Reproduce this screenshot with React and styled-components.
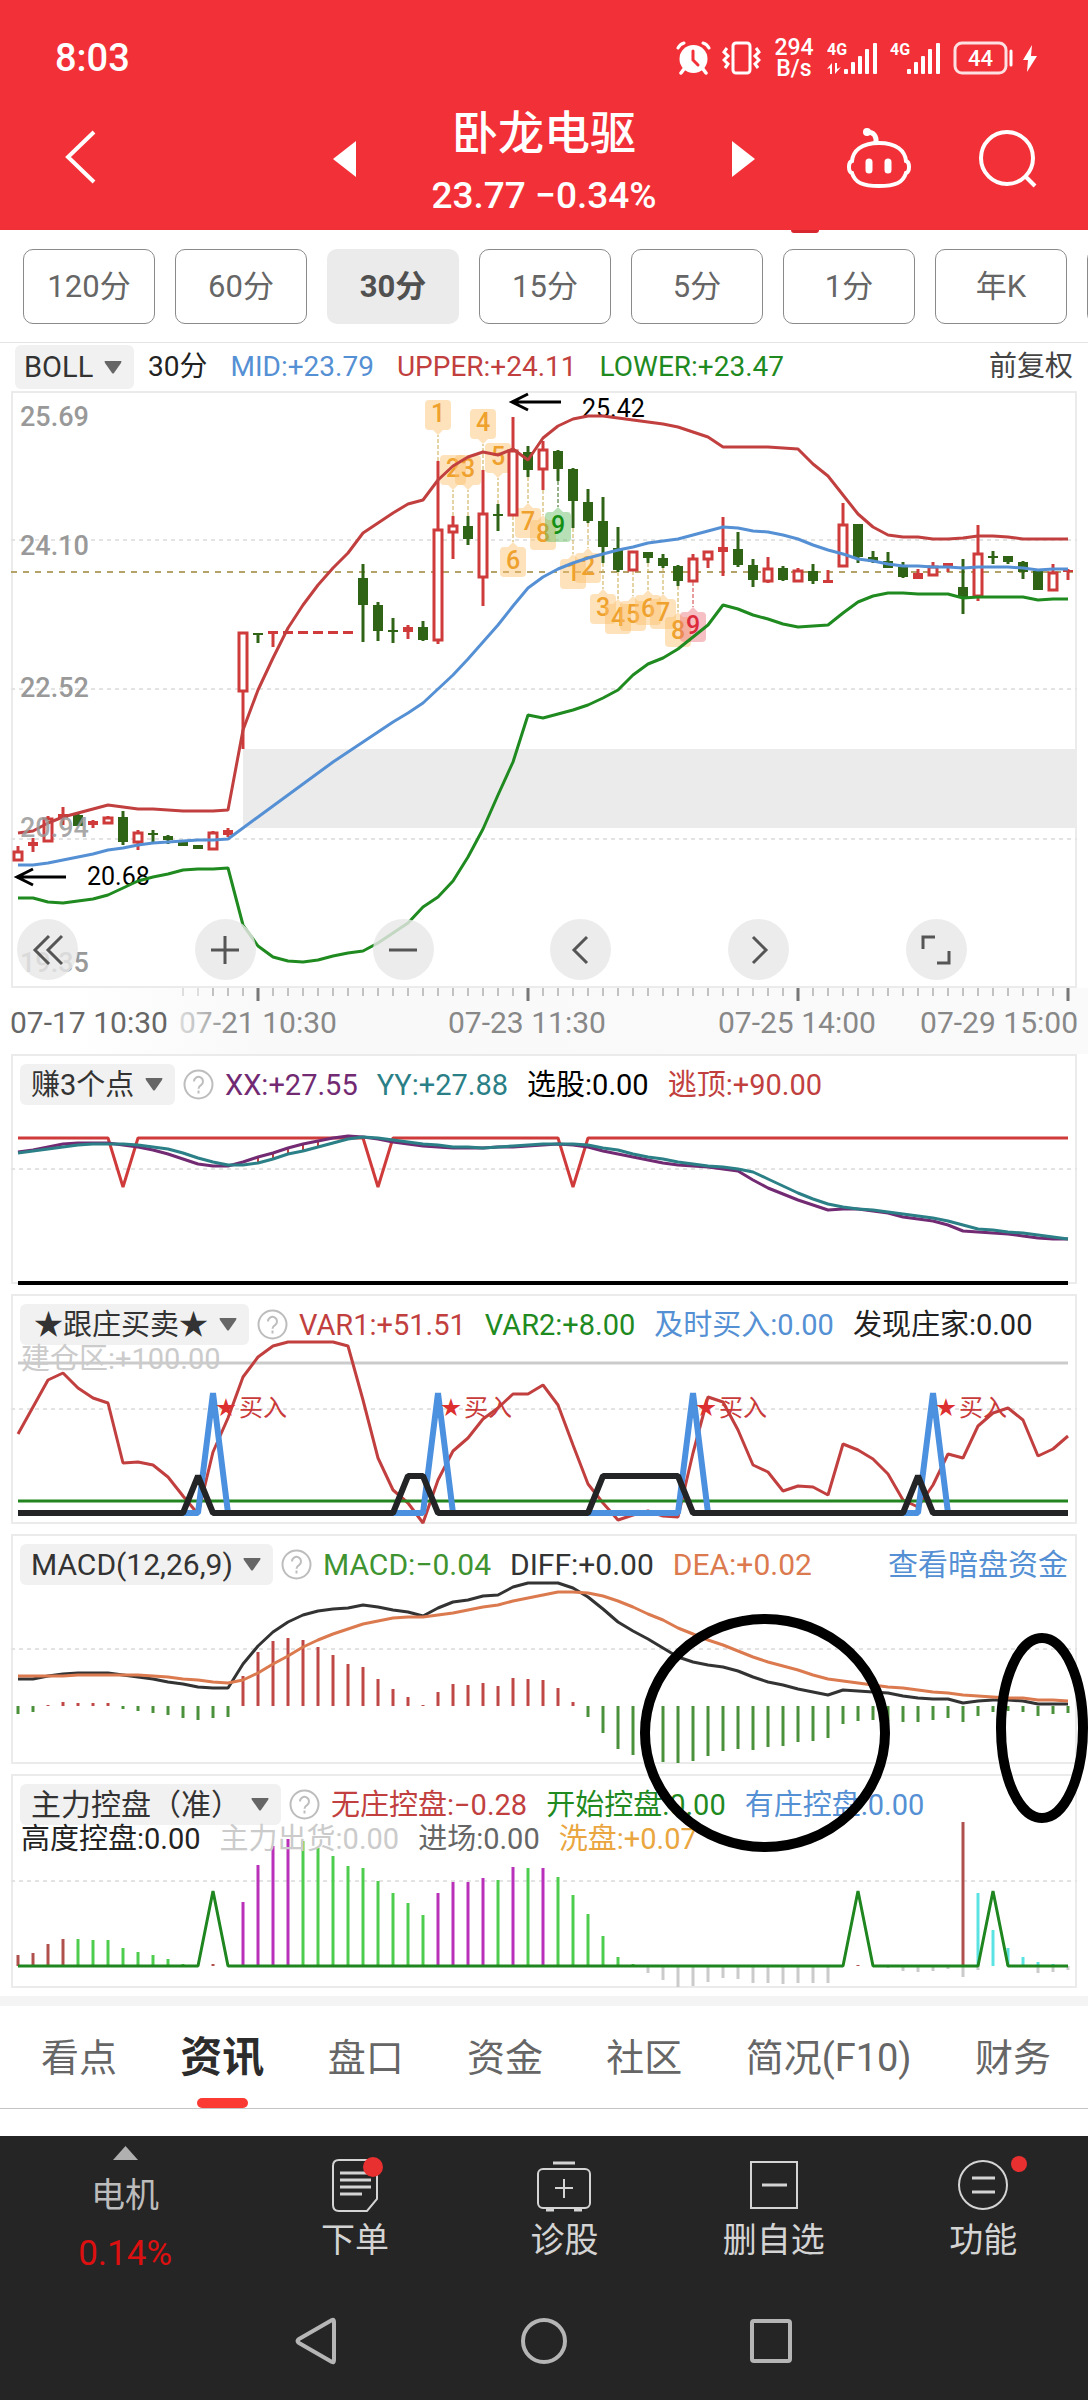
import { useState } from "react";
import styled, { createGlobalStyle } from "styled-components";

const FONT = `Roboto, "Noto Sans CJK SC", sans-serif`;
const RED = "#c13f3e";
const GREEN = "#1f8a1f";
const BLUE = "#5590d4";
const CANDLE_RED = "#cf3b3a";
const CANDLE_GREEN = "#2f6316";

const GlobalStyle = createGlobalStyle`
  * { box-sizing: border-box; }
  body {
    margin: 0;
    background: #fff;
    font-family: ${FONT};
  }
  button, select {
    font-family: inherit;
    border: 0;
    padding: 0;
    margin: 0;
    background: none;
    color: inherit;
    cursor: pointer;
  }
  svg { display: block; }
`;

/* ---------- header ---------- */

const Header = styled.header`
  background: #f23038;
  color: #fff;
`;

const StatusBar = styled.div`
  display: flex;
  justify-content: space-between;
  align-items: center;
  height: 80px;
  padding: 36px 50px 0 55px;
`;

const Clock = styled.time`
  font-size: 38px;
  line-height: 44px;
  font-weight: 500;
`;

const StatusIcons = styled.div`
  display: flex;
  align-items: center;
  gap: 11px;
`;

const NetSpeed = styled.div`
  width: 44px;
  font-size: 23px;
  line-height: 21px;
  font-weight: 500;
  text-align: center;
`;

const TitleBar = styled.div`
  display: grid;
  grid-template-columns: 1fr auto 1fr;
  align-items: center;
  height: 150px;
  padding: 8px 50px 0;
`;

const BackCell = styled.div`
  padding-left: 14px;
`;

const StockSwitcher = styled.div`
  display: flex;
  align-items: center;
  justify-content: space-between;
  width: 422px;
`;

const TitleBlock = styled.div`
  padding-top: 12px;
  text-align: center;
`;

const StockName = styled.h1`
  margin: 0;
  font-size: 46px;
  line-height: 62px;
  font-weight: 500;
`;

const StockPrice = styled.div`
  font-size: 37px;
  line-height: 64px;
  font-weight: 500;
`;

const HeaderActions = styled.div`
  display: flex;
  align-items: center;
  justify-content: flex-end;
  gap: 65px;
`;

/* ---------- period bar ---------- */

const PeriodBar = styled.nav`
  overflow: hidden;
  height: 112px;
`;

const PeriodMarker = styled.div`
  width: 28px;
  height: 3px;
  margin-left: 72.7%;
  border-radius: 0 0 3px 3px;
  background: #d9272f;
`;

const PeriodList = styled.div`
  display: flex;
  gap: 20px;
  padding: 16px 0 0 23px;
`;

const PeriodButton = styled.button`
  flex: none;
  width: 132px;
  height: 75px;
  border-radius: 10px;
  font-size: 31px;
  line-height: 40px;

  && {
    border: ${({ $active }) => ($active ? "0" : "1px solid #8a8a8a")};
    background: ${({ $active }) => ($active ? "#ebebeb" : "#fff")};
    color: ${({ $active }) => ($active ? "#505050" : "#666")};
    font-weight: ${({ $active }) => ($active ? 700 : 400)};
  }
`;

/* ---------- indicator labels ---------- */

const PickerBox = styled.span`
  display: inline-grid;
  align-items: center;
  height: ${({ $tall }) => ($tall ? 44 : 41)}px;
  border-radius: 6px;
  background: #f1f1f1;

  & > * {
    grid-area: 1 / 1;
  }
  & > svg {
    justify-self: end;
    margin-right: 12px;
    pointer-events: none;
  }
`;

const PickerSelect = styled.select`
  appearance: none;
  height: 100%;
  font-size: ${({ $size }) => $size}px;
  color: #333;

  && {
    padding: 0 40px 0 ${({ $inset }) => $inset}px;
  }
`;

const Value = styled.span`
  color: ${({ $color }) => $color};
  font-size: ${({ $size = 29 }) => $size}px;
  line-height: 40px;
  white-space: nowrap;
`;

const BollRow = styled.div`
  display: flex;
  align-items: center;
  gap: 23px;
  height: 49px;
  padding: 0 15px;
  border-top: 1px solid #e4e4e4;

  & > :first-child {
    margin-right: -9px;
  }
  & > :last-child {
    margin-left: auto;
  }
`;

const LabelRows = styled.div`
  padding: 10px 9px 0;
  z-index: 1;
`;

const LabelRow = styled.div`
  display: flex;
  align-items: center;
  height: 41px;
  gap: 19px;
`;

const SubLabelRow = styled(LabelRow)`
  height: 27px;
  padding-left: 1px;
`;

const PickerGroup = styled.span`
  display: flex;
  align-items: center;
  gap: 8px;
  margin-right: -8px;
`;

const DarkPoolLink = styled.a`
  margin-left: auto;
  font-size: 30px;
  line-height: 40px;
  color: ${BLUE};
  text-decoration: none;
`;

/* ---------- charts ---------- */

const Charts = styled.main`
  position: relative;
`;

const Panel = styled.section`
  display: grid;
  position: relative;
  margin: 0 11px ${({ $gap = 0 }) => $gap}px;
  box-shadow: inset 0 0 0 2px #ebebeb;

  & > * {
    grid-area: 1 / 1;
  }
`;

const ChartSvg = styled.svg`
  width: 100%;
  height: auto;
  overflow: visible;
  font-family: ${FONT};
`;

const ChartTools = styled.div`
  position: absolute;
  left: 6px;
  right: 110px;
  bottom: 8px;
  display: flex;
  justify-content: space-between;
`;

const ToolButton = styled.button`
  display: grid;
  place-items: center;
  width: 61px;
  height: 61px;

  && {
    border-radius: 50%;
    background: rgba(232, 232, 232, 0.82);
  }
`;

const TimeAxis = styled.div`
  background: linear-gradient(90deg, #fff 0, #fff 6%, #f9f9f9 24%, #fafafa 100%);
`;

const Annotated = styled.div`
  position: relative;
`;

const Rings = styled.svg`
  position: absolute;
  top: 0;
  left: 0;
  width: 100%;
  height: auto;
  z-index: 2;
  pointer-events: none;
  overflow: visible;
`;

/* ---------- tabs and bottom bar ---------- */

const Tabs = styled.nav`
  display: flex;
  justify-content: space-between;
  height: 113px;
  padding: 0 37px 0 41px;
  border-top: 10px solid #f4f4f4;
  border-bottom: 1px solid #c4c4c4;
  margin: 8px 0 27px;
`;

const Tab = styled.button`
  display: flex;
  flex-direction: column;
  align-items: center;
  justify-content: space-between;
  height: 102px;
  line-height: 60px;

  && {
    padding-top: 22px;
    color: ${({ $active }) => ($active ? "#2c2c2c" : "#666")};
    font-size: ${({ $active }) => ($active ? 42 : 38)}px;
    font-weight: ${({ $active }) => ($active ? 700 : 400)};
  }
  &::after {
    content: "";
    width: 51px;
    height: 10px;
    border-radius: 5px;
    background: ${({ $active }) => ($active ? "#fb3b33" : "transparent")};
  }
`;

const BottomBar = styled.footer`
  background: #252525;
  color: #d4d4d4;
`;

const Actions = styled.nav`
  display: grid;
  grid-template-columns: 23% repeat(4, 1fr);
  height: 146px;
`;

const Action = styled.button`
  display: flex;
  flex-direction: column;
  align-items: center;
  gap: 8px;
  font-size: 34px;
  line-height: 40px;

  && {
    padding-top: 22px;
  }
`;

const SectorAction = styled(Action)`
  gap: 15px;

  && {
    padding-top: 10px;
    color: #bcbcbc;
  }
`;

const SectorChange = styled.span`
  margin-top: 4px;
  font-size: 35px;
  color: #dc1010;
`;

const SystemNav = styled.nav`
  display: flex;
  align-items: center;
  justify-content: center;
  gap: 181px;
  height: 118px;
`;

/* ---------- chart data ---------- */

const X0 = 18;
const STEP = 15;
const px = (i) => X0 + STEP * i;
const points = (ys) => ys.map((y, i) => `${px(i)},${y}`).join(" ");

const UPPER = [
  833, 831, 823, 817, 813, 809, 805, 807, 809, 809, 810, 811, 811, 811, 810, 730, 690, 658, 628, 605, 585, 568, 553,
  533, 523, 513, 504, 500, 480, 466, 457, 452, 455, 449, 460, 438, 426, 419, 416, 416, 418, 420, 422, 424, 427, 432,
  437, 447, 447, 447, 447, 448, 449, 464, 476, 495, 514, 527, 535, 537, 537, 539, 539, 538, 536, 536, 537, 539, 539,
  539, 539,
];

const MID = [
  865, 865, 863, 860, 857, 854, 850, 848, 845, 843, 842, 841, 840, 840, 839, 828, 817, 806, 795, 784, 773, 762, 752,
  742, 732, 722, 713, 703, 689, 675, 659, 642, 625, 606, 588, 577, 569, 563, 558, 554, 550, 547, 543, 541, 539, 535,
  531, 527, 528, 531, 532, 535, 539, 545, 550, 554, 559, 561, 564, 566, 566, 567, 567, 568, 567, 567, 567, 568, 570,
  569, 569,
];

const LOWER = [
  898, 898, 902, 903, 901, 899, 895, 888, 881, 877, 874, 870, 869, 869, 868, 925, 946, 957, 961, 962, 960, 956, 953,
  951, 943, 933, 923, 907, 897, 881, 857, 829, 795, 762, 715, 718, 714, 710, 705, 698, 690, 675, 664, 658, 649, 637,
  625, 605, 609, 615, 619, 624, 627, 626, 625, 613, 602, 596, 593, 593, 594, 594, 594, 598, 597, 597, 597, 597, 600,
  599, 599,
];

// [direction, high, body top, body bottom, low]
const CANDLES = [
  ["r", 846, 851, 861, 861], ["r", 838, 842, 846, 852], ["r", 816, 818, 842, 842], ["r", 807, 814, 818, 825],
  ["g", 813, 815, 826, 826], ["r", 820, 821, 825, 828], ["r", 816, 817, 824, 824], ["g", 811, 817, 842, 845],
  ["r", 830, 832, 843, 850], ["g", 830, 833, 835, 842], ["g", 835, 836, 840, 844], ["g", 840, 842, 846, 846],
  ["g", 845, 845, 849, 849], ["r", 831, 832, 850, 850], ["r", 828, 830, 835, 837], ["r", 632, 632, 692, 749],
  ["g", 633, 633, 635, 643], ["r", 631, 631, 634, 647], ["r", 631, 631, 634, 634], ["r", 631, 631, 634, 634],
  ["r", 631, 631, 634, 634], ["r", 631, 631, 634, 634], ["r", 631, 631, 634, 634], ["g", 564, 578, 605, 642],
  ["g", 602, 605, 631, 641], ["g", 618, 630, 632, 643], ["r", 625, 627, 632, 639], ["g", 621, 627, 640, 641],
  ["r", 461, 529, 641, 644], ["r", 516, 525, 533, 559], ["g", 516, 526, 539, 545], ["r", 470, 513, 578, 606],
  ["g", 504, 514, 516, 531], ["r", 417, 450, 516, 516], ["g", 446, 452, 470, 477], ["r", 441, 449, 470, 490],
  ["g", 450, 451, 469, 481], ["g", 468, 469, 501, 528], ["g", 489, 502, 521, 523], ["g", 497, 521, 547, 563],
  ["g", 527, 548, 570, 572], ["r", 551, 551, 571, 571], ["g", 552, 552, 558, 563], ["g", 554, 558, 566, 568],
  ["g", 565, 566, 581, 586], ["r", 554, 558, 582, 582], ["r", 551, 551, 560, 568], ["r", 517, 547, 552, 576],
  ["g", 532, 549, 565, 567], ["g", 559, 565, 580, 587], ["r", 557, 568, 582, 583], ["g", 566, 568, 580, 581],
  ["r", 568, 570, 582, 582], ["g", 564, 571, 581, 584], ["r", 570, 580, 583, 583], ["r", 503, 524, 567, 567],
  ["g", 524, 524, 557, 563], ["g", 551, 557, 562, 563], ["g", 552, 561, 568, 568], ["g", 562, 567, 577, 578],
  ["r", 569, 573, 579, 579], ["r", 562, 566, 576, 576], ["r", 563, 563, 568, 572], ["g", 559, 587, 597, 614],
  ["r", 525, 553, 597, 601], ["g", 551, 556, 558, 564], ["g", 556, 556, 562, 564], ["g", 561, 562, 572, 579],
  ["g", 571, 571, 590, 590], ["r", 564, 572, 591, 591], ["r", 569, 570, 572, 580],
];

// [bar, label, tip y, candle end y, colour, points down]
const COUNTS = [
  [28, "1", 435, 461, "o", true], [29, "2", 490, 516, "o", true], [30, "3", 490, 516, "o", true],
  [31, "4", 444, 470, "o", true], [32, "5", 478, 504, "o", true], [33, "6", 542, 516, "o"],
  [34, "7", 503, 477, "o"], [35, "8", 515, 490, "o"], [36, "9", 507, 481, "g"], [37, "1", 554, 528, "o"],
  [38, "2", 548, 523, "o"], [39, "3", 589, 563, "o"], [40, "4", 599, 572, "o"], [41, "5", 596, 571, "o"],
  [42, "6", 590, 563, "o"], [43, "7", 594, 568, "o"], [44, "8", 612, 586, "o"], [45, "9", 607, 582, "r"],
];

const COUNT_COLORS = {
  o: ["#fcbf6b", "#efa12d", "#c9a94d"],
  g: ["#5fbb5f", "#159015", "#2f6316"],
  r: ["#e8717a", "#dd2a3c", "#cf3b3a"],
};

const XX = [
  1152, 1150, 1147, 1144, 1143, 1143, 1143, 1145, 1147, 1150, 1154, 1159, 1164, 1166, 1166, 1162, 1157, 1153, 1148,
  1144, 1141, 1138, 1136, 1137, 1139, 1142, 1144, 1146, 1147, 1148, 1148, 1148, 1147, 1147, 1146, 1145, 1144, 1145,
  1147, 1151, 1154, 1157, 1160, 1163, 1165, 1166, 1167, 1169, 1171, 1180, 1188, 1194, 1200, 1205, 1210, 1209, 1209,
  1211, 1213, 1217, 1219, 1221, 1225, 1231, 1232, 1233, 1234, 1236, 1238, 1239, 1239,
];

const YY = [
  1153, 1151, 1149, 1147, 1145, 1144, 1144, 1144, 1145, 1147, 1149, 1153, 1158, 1162, 1165, 1165, 1163, 1159, 1154,
  1151, 1147, 1143, 1139, 1137, 1138, 1140, 1142, 1144, 1145, 1147, 1147, 1148, 1147, 1146, 1145, 1144, 1144, 1144,
  1145, 1148, 1150, 1154, 1157, 1159, 1162, 1164, 1166, 1167, 1169, 1172, 1179, 1186, 1193, 1199, 1204, 1207, 1209,
  1210, 1212, 1214, 1216, 1218, 1221, 1225, 1229, 1230, 1232, 1233, 1235, 1237, 1239,
];

const VAR1 = [
  1434, 1407, 1380, 1373, 1388, 1398, 1403, 1463, 1462, 1465, 1477, 1496, 1514, 1452, 1418, 1377, 1357, 1346, 1342,
  1342, 1342, 1342, 1346, 1400, 1458, 1490, 1503, 1523, 1480, 1451, 1438, 1419, 1408, 1394, 1394, 1385, 1405, 1445,
  1484, 1503, 1520, 1515, 1511, 1516, 1517, 1453, 1397, 1402, 1430, 1465, 1472, 1491, 1486, 1487, 1495, 1444, 1450,
  1459, 1474, 1500, 1507, 1485, 1454, 1458, 1426, 1413, 1408, 1420, 1456, 1449, 1436,
];

const DIFF = [
  1679, 1679, 1676, 1674, 1673, 1673, 1673, 1675, 1677, 1679, 1682, 1684, 1687, 1688, 1688, 1664, 1646, 1632, 1622,
  1615, 1611, 1609, 1608, 1605, 1607, 1610, 1612, 1616, 1608, 1602, 1600, 1596, 1595, 1587, 1583, 1583, 1583, 1588,
  1597, 1609, 1622, 1631, 1639, 1648, 1657, 1662, 1665, 1667, 1671, 1677, 1682, 1685, 1689, 1692, 1695, 1690, 1691,
  1692, 1693, 1696, 1698, 1699, 1699, 1703, 1701, 1700, 1700, 1701, 1704, 1704, 1704,
];

const DEA = [
  1676, 1676, 1676, 1676, 1675, 1675, 1675, 1675, 1675, 1676, 1677, 1679, 1680, 1682, 1683, 1680, 1673, 1664, 1656,
  1647, 1640, 1634, 1629, 1624, 1621, 1618, 1617, 1617, 1615, 1613, 1610, 1607, 1605, 1601, 1598, 1595, 1592, 1592,
  1593, 1596, 1601, 1607, 1614, 1620, 1628, 1634, 1640, 1645, 1651, 1657, 1662, 1666, 1670, 1675, 1679, 1681, 1683,
  1685, 1687, 1688, 1690, 1692, 1693, 1695, 1696, 1697, 1698, 1698, 1700, 1700, 1701,
];

const MACD_ZERO = 1706;
const MACD_BARS = [
  1714, 1712, 1705, 1702, 1703, 1703, 1703, 1709, 1711, 1713, 1715, 1718, 1720, 1718, 1717, 1676, 1652, 1641, 1638,
  1640, 1647, 1655, 1664, 1667, 1679, 1689, 1697, 1705, 1692, 1684, 1685, 1683, 1686, 1678, 1679, 1680, 1688, 1702,
  1717, 1733, 1749, 1755, 1758, 1762, 1763, 1761, 1756, 1751, 1749, 1750, 1747, 1746, 1742, 1741, 1738, 1724, 1721,
  1720, 1721, 1722, 1722, 1720, 1718, 1722, 1716, 1712, 1711, 1712, 1716, 1714, 1713,
];

const CONTROL_ZERO = 1966;
const CONTROL_BARS = [
  ["#b0504c", { 0: 1955, 1: 1953, 2: 1944, 3: 1939, 13: 1964, 56: 1965, 63: 1822 }],
  [
    "#4dcc4d",
    {
      4: 1939, 5: 1940, 6: 1940, 7: 1948, 8: 1952, 9: 1955, 10: 1959, 11: 1964, 19: 1841, 20: 1848, 21: 1856, 22: 1866,
      23: 1868, 24: 1881, 25: 1893, 26: 1903, 27: 1915, 32: 1880, 34: 1868, 36: 1877, 37: 1895, 38: 1914, 39: 1936,
      40: 1957, 41: 1964,
    },
  ],
  ["#b931b9", { 15: 1902, 16: 1865, 17: 1846, 18: 1839, 28: 1893, 29: 1882, 30: 1882, 31: 1878, 33: 1867, 35: 1868 }],
  ["#5be3e3", { 64: 1893, 65: 1930, 66: 1948, 67: 1957, 68: 1962, 69: 1964 }],
  [
    "#cbcbcb",
    {
      42: 1973, 43: 1980, 44: 1987, 45: 1986, 46: 1982, 47: 1978, 48: 1979, 49: 1983, 50: 1983, 51: 1984, 52: 1983,
      53: 1983, 54: 1983, 58: 1968, 59: 1971, 60: 1972, 61: 1971, 62: 1969, 63: 1977, 64: 1970, 68: 1973, 69: 1972,
      70: 1970,
    },
  ],
];

// flat line at `base` that reaches `peak` on the listed bars
const pulse = (base, peak, bars) => Array.from({ length: 71 }, (_, i) => (bars.includes(i) ? peak : base));

/* ---------- chart parts ---------- */

const Line = ({ ys, color, width = 3 }) => (
  <polyline points={points(ys)} fill="none" stroke={color} strokeWidth={width} strokeLinejoin="bevel" />
);

const Grid = ({ y, color = "#e3e3e3" }) => (
  <line x1="11" x2="1077" y1={y} y2={y} stroke={color} strokeWidth="2" strokeDasharray="4 4" />
);

const Candle = ({ i, data: [dir, high, top, bottom, low] }) => {
  const x = px(i);
  const color = dir === "r" ? CANDLE_RED : CANDLE_GREEN;
  const hollow = dir === "r" && bottom - top > 6;
  return (
    <g stroke={color} fill={color}>
      {high < top && <line x1={x} x2={x} y1={high} y2={top} strokeWidth="3" />}
      {low > bottom && <line x1={x} x2={x} y1={bottom} y2={low} strokeWidth="3" />}
      {hollow ? (
        <rect x={x - 4} y={top + 1} width="8" height={bottom - top - 2} fill="#fff" strokeWidth="3" />
      ) : (
        <rect x={x - 5} y={top} width="10" height={bottom - top} stroke="none" />
      )}
    </g>
  );
};

const CountBadge = ({ data: [i, label, tip, end, tone, down] }) => {
  const [fill, text, dash] = COUNT_COLORS[tone];
  const x = px(i);
  const s = down ? -1 : 1;
  const edge = tip + 5 * s;
  const sweep = down ? 0 : 1;
  return (
    <g>
      <line x1={x} x2={x} y1={end} y2={tip} stroke={dash} strokeDasharray="4 2" />
      <path
        d={`M${x} ${tip} L${x + 5} ${edge} H${x + 9} a4 4 0 0 ${sweep} 4 ${4 * s} V${edge + 26 * s} a4 4 0 0 ${sweep} -4 ${
          4 * s
        } H${x - 9} a4 4 0 0 ${sweep} -4 ${-4 * s} V${edge + 4 * s} a4 4 0 0 ${sweep} 4 ${-4 * s} H${x - 5} Z`}
        fill={fill}
        opacity="0.45"
      />
      <text x={x} y={down ? tip - 13 : tip + 27} fontSize="25" fontWeight="500" textAnchor="middle" fill={text}>
        {label}
      </text>
    </g>
  );
};

const Arrow = ({ x, y, label, textX, textY }) => (
  <g>
    <path
      d={`M${x + 50} ${y} H${x + 2} M${x + 17} ${y - 8} L${x + 1} ${y} L${x + 17} ${y + 8}`}
      fill="none"
      stroke="#000"
      strokeWidth="3"
    />
    <text x={textX} y={textY} fontSize="25">
      {label}
    </text>
  </g>
);

const PriceChart = () => (
  <ChartSvg viewBox="11 391 1066 597" role="img" aria-label="BOLL">
    <rect x="243" y="749" width="834" height="79" fill="#ebebeb" />
    <Grid y={540} />
    <Grid y={689} />
    <Grid y={839} />
    <line x1="11" x2="1077" y1="572" y2="572" stroke="#b3a368" strokeWidth="2" strokeDasharray="6 6" />
    {COUNTS.map((c) => (
      <CountBadge key={c[0]} data={c} />
    ))}
    <Arrow x={511} y={402} label="25.42" textX={582} textY={417} />
    <Arrow x={16} y={877} label="20.68" textX={87} textY={885} />
    {CANDLES.map((c, i) => (
      <Candle key={i} i={i} data={c} />
    ))}
    <Line ys={UPPER} color={RED} />
    <Line ys={MID} color={BLUE} />
    <Line ys={LOWER} color={GREEN} />
    <g fontSize="27" fontWeight="500" fill="#999">
      <text x="20" y="426">25.69</text>
      <text x="20" y="555">24.10</text>
      <text x="20" y="697">22.52</text>
      <text x="20" y="837" fillOpacity="0.85">20.94</text>
      <text x="20" y="972">19.35</text>
    </g>
  </ChartSvg>
);

const AxisSvg = () => (
  <ChartSvg viewBox="0 988 1088 66" aria-label="时间轴">
    {Array.from({ length: 60 }, (_, k) => k + 11).map((i) => {
      const major = (i - 16) % 18 === 0;
      return (
        <line
          key={i}
          x1={px(i)}
          x2={px(i)}
          y1="988"
          y2={major ? 1001 : 996}
          stroke={major ? "#777" : "#c2c2c2"}
          strokeWidth={major ? 3 : 2}
          opacity={i < 13 ? 0.5 : 1}
        />
      );
    })}
    <defs>
      <linearGradient id="fade" x1="0" x2="1" y1="0" y2="0">
        <stop offset="0" stopColor="#ddd" />
        <stop offset="0.35" stopColor="#888" />
      </linearGradient>
    </defs>
    <g fontSize="30" fill="#888">
      <text x="10" y="1033" fill="#666">07-17 10:30</text>
      <text x="179" y="1033" fill="url(#fade)">07-21 10:30</text>
      <text x="448" y="1033">07-23 11:30</text>
      <text x="718" y="1033">07-25 14:00</text>
      <text x="1078" y="1033" textAnchor="end">07-29 15:00</text>
    </g>
  </ChartSvg>
);

const ProfitChart = () => (
  <ChartSvg viewBox="11 1054 1066 230" role="img" aria-label="赚3个点">
    <Grid y={1169} />
    {[16, 17, 18, 19, 20].map((i) => (
      <line key={i} x1={px(i)} x2={px(i)} y1={XX[i]} y2={YY[i]} stroke={RED} strokeWidth="2" />
    ))}
    <Line ys={pulse(1138, 1187, [7, 24, 37])} color="#cf3b3a" />
    <Line ys={XX} color="#722a72" />
    <Line ys={YY} color="#2b7f86" />
    <Line ys={pulse(1283, 1283, [])} color="#000" width={4} />
  </ChartSvg>
);

const FollowChart = () => (
  <ChartSvg viewBox="11 1294 1066 230" role="img" aria-label="跟庄买卖">
    <Grid y={1409} />
    <Line ys={pulse(1363, 1363, [])} color="#cbcbcb" />
    <Line ys={VAR1} color={RED} />
    <Line ys={pulse(1501, 1501, [])} color="#23851f" />
    <Line ys={pulse(1513, 1393, [13, 28, 45, 61])} color="#4c90e0" width={6} />
    <Line ys={pulse(1513, 1476, [12, 26, 27, 39, 40, 41, 42, 43, 44, 60])} color="#222426" width={6} />
    {[13, 28, 45, 61].map((i) => (
      <g key={i} fill="#c93b3a">
        <text x={px(i) + 3} y="1415" fontSize="20" fill="#dd2f2f">
          ★
        </text>
        <text x={px(i) + 26} y="1416" fontSize="24">
          买入
        </text>
      </g>
    ))}
  </ChartSvg>
);

const MacdChart = () => (
  <ChartSvg viewBox="11 1534 1066 230" role="img" aria-label="MACD">
    <Grid y={1649} />
    {MACD_BARS.map((y, i) => (
      <line
        key={i}
        x1={px(i)}
        x2={px(i)}
        y1={MACD_ZERO}
        y2={y}
        stroke={y < MACD_ZERO ? "#bf4745" : "#4b913b"}
        strokeWidth="3"
      />
    ))}
    <Line ys={DIFF} color="#333" />
    <Line ys={DEA} color="#dc7a4f" />
  </ChartSvg>
);

const ControlChart = () => (
  <ChartSvg viewBox="11 1774 1066 214" role="img" aria-label="主力控盘">
    <Grid y={1881} />
    {CONTROL_BARS.map(([color, bars]) =>
      Object.entries(bars).map(([i, y]) => (
        <line key={color + i} x1={px(+i)} x2={px(+i)} y1={CONTROL_ZERO} y2={y} stroke={color} strokeWidth="3" />
      ))
    )}
    <Line ys={pulse(CONTROL_ZERO, 1891, [13, 56, 65])} color="#1f861f" />
  </ChartSvg>
);

const Picker = ({ label, inset = 11, size = 29, tall }) => (
  <PickerBox $tall={tall}>
    <PickerSelect aria-label="指标" $inset={inset} $size={size} defaultValue={label}>
      <option>{label}</option>
    </PickerSelect>
    <svg width="18" height="13" viewBox="0 0 18 13">
      <path d="M1 0 H17 Q18 0 17 2 L10 12 Q9 13 8 12 L1 2 Q0 0 1 0Z" fill="#666" />
    </svg>
  </PickerBox>
);

const HelpIcon = () => (
  <svg width="31" height="31" viewBox="0 0 31 31" fill="none" stroke="#bdbdbd" strokeWidth="2">
    <circle cx="15.500" cy="15.500" r="14" />
    <path d="M11 12.500 a4.500 4.500 0 1 1 7 3.600 q-2.500 1.600 -2.500 3.600" />
    <path d="M15.500 21.500 v3" />
  </svg>
);

const IndicatorLabels = ({ picker, inset, pickerSize, valueSize, values, sub, link }) => (
  <LabelRows>
    <LabelRow>
      <PickerGroup>
        <Picker label={picker} inset={inset} size={pickerSize} />
        <HelpIcon />
      </PickerGroup>
      {values.map(([text, color]) => (
        <Value key={text} $color={color} $size={valueSize}>
          {text}
        </Value>
      ))}
      {link && <DarkPoolLink href="#dark-pool">{link}</DarkPoolLink>}
    </LabelRow>
    {sub && (
      <SubLabelRow>
        {sub.map(([text, color]) => (
          <Value key={text} $color={color}>
            {text}
          </Value>
        ))}
      </SubLabelRow>
    )}
  </LabelRows>
);

/* ---------- icons ---------- */

const AlarmIcon = () => (
  <svg width="35" height="34" viewBox="0 0 35 34" fill="none" stroke="#fff" strokeLinecap="round">
    <circle cx="17.500" cy="18" r="14" fill="#fff" stroke="none" />
    <path d="M2 7 Q4 3 8 2 M33 7 Q31 3 27 2" strokeWidth="3" />
    <path d="M8 28 L5 32 M27 28 L30 32" strokeWidth="3.500" />
    <path d="M17 10 V19 L22 24" stroke="#f23038" strokeWidth="3" />
  </svg>
);

const VibrateIcon = () => (
  <svg width="39" height="34" viewBox="0 0 39 34" fill="none" stroke="#fff" strokeWidth="3">
    <rect x="11" y="2" width="17" height="30" rx="3" />
    <path d="M5 7 l-3 4 4 4 -4 4 4 4 -3 4 M34 7 l3 4 -4 4 4 4 -4 4 3 4" />
  </svg>
);

const SignalIcon = ({ arrows }) => (
  <svg width="52" height="36" viewBox="0 0 52 36" fill="#fff" fontFamily={FONT}>
    <text x="0" y="15" fontSize="16" fontWeight="700">4G</text>
    {arrows && <path d="M0 29 L5 23 V34 H3 V28 Z M8 23 H10 V29 L14 27 L8 34 Z" />}
    <rect x="17" y="29" width="4" height="5" rx="1" />
    <rect x="24" y="22" width="4" height="12" rx="1" />
    <rect x="31" y="16" width="4" height="18" rx="1" />
    <rect x="38" y="9" width="4" height="25" rx="1" />
    <rect x="46" y="3" width="4" height="31" rx="1" />
  </svg>
);

const BatteryIcon = () => (
  <svg width="85" height="34" viewBox="0 0 85 34" fill="none" stroke="#fff">
    <rect x="2" y="2" width="51" height="30" rx="7" strokeWidth="3" opacity="0.85" />
    <path d="M58 10 V24" strokeWidth="3" strokeLinecap="round" />
    <text x="27.500" y="25" fontSize="22" fontWeight="500" textAnchor="middle" fill="#fff" stroke="none" fontFamily={FONT}>
      44
    </text>
    <path d="M79 4 L70 19 H75 L74 31 L84 15 H78 Z" fill="#fff" stroke="none" />
  </svg>
);

const BackIcon = () => (
  <svg width="33" height="56" viewBox="0 0 33 56">
    <path d="M30 3 L4 28 L30 53" fill="none" stroke="#fff" strokeWidth="4" />
  </svg>
);

const RobotIcon = () => (
  <svg width="68" height="64" viewBox="0 0 68 64" fill="none" stroke="#fff" strokeWidth="5">
    <path d="M22 5 Q32 5 31 16" />
    <circle cx="22" cy="5" r="4" fill="#fff" stroke="none" />
    <path
      d="M34 16 C52 16 60 24 61 34 C65 35 65 45 61 46 C58 56 50 59 34 59 C18 59 10 56 7 46 C3 45 3 35 7 34 C8 24 16 16 34 16Z"
      strokeWidth="4"
    />
    <path d="M24 35 V43 M43 35 V43" strokeWidth="7" strokeLinecap="round" />
  </svg>
);

const SearchIcon = () => (
  <svg width="60" height="60" viewBox="0 0 60 60" fill="none" stroke="#fff" strokeWidth="4">
    <circle cx="29" cy="29" r="26" />
    <path d="M47 47 L57 57" />
  </svg>
);

const TOOL_PATHS = {
  首页: "M29 14 L15 28 L29 42 M42 14 L28 28 L42 42",
  放大: "M28 14 V42 M14 28 H42",
  缩小: "M14 28 H42",
  左移: "M34 15 L21 28 L34 41",
  右移: "M22 15 L35 28 L22 41",
  全屏: "M15 27 V15 H27 M41 29 V41 H29",
};

const OrderIcon = () => (
  <svg width="48" height="54" viewBox="0 0 48 54" fill="none" stroke="#d4d4d4" strokeWidth="2" overflow="visible">
    <path d="M8 2 H40 Q46 2 46 8 V41 L36 53 H8 Q2 53 2 47 V8 Q2 2 8 2Z" />
    <path d="M9 15 H40 M9 22 H40 M9 29 H40 M9 36 H31" strokeWidth="3" />
    <circle cx="42" cy="9" r="10" fill="#e83030" stroke="none" />
  </svg>
);

const DiagnoseIcon = () => (
  <svg width="56" height="54" viewBox="0 0 56 54" fill="none" stroke="#d4d4d4" strokeWidth="2">
    <rect x="2" y="11" width="52" height="39" rx="5" />
    <path d="M17 5 H39 M10 52 H18 M38 52 H46" strokeWidth="3" />
    <path d="M28 21 V40 M19 30 H37" />
  </svg>
);

const RemoveIcon = () => (
  <svg width="48" height="54" viewBox="0 0 48 54" fill="none" stroke="#d4d4d4" strokeWidth="2">
    <rect x="1" y="4" width="46" height="46" />
    <path d="M12 27 H37" strokeWidth="3" />
  </svg>
);

const MenuIcon = () => (
  <svg width="52" height="54" viewBox="0 0 52 54" fill="none" stroke="#d4d4d4" strokeWidth="2" overflow="visible">
    <circle cx="26" cy="27" r="24" />
    <path d="M15 20 H38 M15 34 H38" strokeWidth="3" />
    <circle cx="62" cy="6" r="8" fill="#e83030" stroke="none" />
  </svg>
);

const PERIODS = ["120分", "60分", "30分", "15分", "5分", "1分", "年K"];
const TABS = ["看点", "资讯", "盘口", "资金", "社区", "简况(F10)", "财务"];
const ACTIONS = [
  ["下单", OrderIcon],
  ["诊股", DiagnoseIcon],
  ["删自选", RemoveIcon],
  ["功能", MenuIcon],
];

export default function App() {
  const [period, setPeriod] = useState("30分");
  const [tab, setTab] = useState("资讯");

  return (
    <>
      <GlobalStyle />
      <Header>
        <StatusBar>
          <Clock>8:03</Clock>
          <StatusIcons>
            <AlarmIcon />
            <VibrateIcon />
            <NetSpeed>294 B/s</NetSpeed>
            <SignalIcon arrows />
            <SignalIcon />
            <BatteryIcon />
          </StatusIcons>
        </StatusBar>
        <TitleBar>
          <BackCell>
            <button aria-label="返回">
              <BackIcon />
            </button>
          </BackCell>
          <StockSwitcher>
            <button aria-label="上一只">
              <svg width="23" height="36" viewBox="0 0 23 36">
                <path d="M23 0 V36 L0 18Z" fill="#fff" />
              </svg>
            </button>
            <TitleBlock>
              <StockName>卧龙电驱</StockName>
              <StockPrice>23.77 −0.34%</StockPrice>
            </TitleBlock>
            <button aria-label="下一只">
              <svg width="23" height="36" viewBox="0 0 23 36">
                <path d="M0 0 V36 L23 18Z" fill="#fff" />
              </svg>
            </button>
          </StockSwitcher>
          <HeaderActions>
            <button aria-label="助手">
              <RobotIcon />
            </button>
            <button aria-label="搜索">
              <SearchIcon />
            </button>
          </HeaderActions>
        </TitleBar>
      </Header>

      <PeriodBar>
        <PeriodMarker />
        <PeriodList>
          {PERIODS.map((p) => (
            <PeriodButton key={p} $active={p === period} onClick={() => setPeriod(p)}>
              {p}
            </PeriodButton>
          ))}
          <PeriodButton aria-label="更多周期" />
        </PeriodList>
      </PeriodBar>

      <Charts>
        <BollRow>
          <Picker label="BOLL" inset={9} tall />
          <Value $size={28} $color="#222">30分</Value>
          <Value $size={28} $color={BLUE}>MID:+23.79</Value>
          <Value $size={28} $color={RED}>UPPER:+24.11</Value>
          <Value $size={28} $color={GREEN}>LOWER:+23.47</Value>
          <Value $size={28} $color="#444">前复权</Value>
        </BollRow>
        <Panel>
          <PriceChart />
          <ChartTools>
            {Object.entries(TOOL_PATHS).map(([name, d]) => (
              <ToolButton key={name} aria-label={name}>
                <svg width="56" height="56" viewBox="0 0 56 56">
                  <path d={d} fill="none" stroke="#555" strokeWidth="3" />
                </svg>
              </ToolButton>
            ))}
          </ChartTools>
        </Panel>
        <TimeAxis>
          <AxisSvg />
        </TimeAxis>

        <Panel $gap={10}>
          <ProfitChart />
          <IndicatorLabels
            picker="赚3个点"
            values={[
              ["XX:+27.55", "#722a72"],
              ["YY:+27.88", "#2b7f86"],
              ["选股:0.00", "#000"],
              ["逃顶:+90.00", RED],
            ]}
          />
        </Panel>
        <Panel $gap={10}>
          <FollowChart />
          <IndicatorLabels
            picker="★跟庄买卖★"
            inset={14}
            values={[
              ["VAR1:+51.51", RED],
              ["VAR2:+8.00", GREEN],
              ["及时买入:0.00", BLUE],
              ["发现庄家:0.00", "#222"],
            ]}
            sub={[["建仓区:+100.00", "#cbcbcb"]]}
          />
        </Panel>
        <Annotated>
          <Panel $gap={10}>
            <MacdChart />
            <IndicatorLabels
              picker="MACD(12,26,9)"
              pickerSize={30}
              valueSize={30}
              values={[
                ["MACD:−0.04", "#3f9431"],
                ["DIFF:+0.00", "#333"],
                ["DEA:+0.02", "#dc7a4f"],
              ]}
              link="查看暗盘资金"
            />
          </Panel>
          <Panel>
            <ControlChart />
            <IndicatorLabels
              picker="主力控盘（准）"
              pickerSize={30}
              values={[
                ["无庄控盘:−0.28", RED],
                ["开始控盘:0.00", GREEN],
                ["有庄控盘:0.00", BLUE],
              ]}
              sub={[
                ["高度控盘:0.00", "#222"],
                ["主力出货:0.00", "#cbcbcb"],
                ["进场:0.00", "#666"],
                ["洗盘:+0.07", "#eaa640"],
              ]}
            />
          </Panel>
          <Rings viewBox="0 1534 1088 454" fill="none" stroke="#000" strokeWidth="10">
            <ellipse cx="765" cy="1733" rx="120" ry="114" />
            <ellipse cx="1042" cy="1728" rx="41" ry="90" />
          </Rings>
        </Annotated>
      </Charts>

      <Tabs>
        {TABS.map((t) => (
          <Tab key={t} $active={t === tab} onClick={() => setTab(t)}>
            {t}
          </Tab>
        ))}
      </Tabs>

      <BottomBar>
        <Actions>
          <SectorAction>
            <svg width="25" height="14" viewBox="0 0 25 14">
              <path d="M12.500 0 L25 14 H0Z" fill="#b0b0b0" />
            </svg>
            <span>电机</span>
            <SectorChange>0.14%</SectorChange>
          </SectorAction>
          {ACTIONS.map(([name, Icon]) => (
            <Action key={name}>
              <Icon />
              <span>{name}</span>
            </Action>
          ))}
        </Actions>
        <SystemNav>
          <button aria-label="后退">
            <svg width="44" height="50" viewBox="0 0 44 50" fill="none" stroke="#b5b5b5" strokeWidth="4">
              <path d="M37 4 Q39 3 39 6 V44 Q39 47 37 46 L4 27 Q1 25 4 23Z" strokeLinejoin="round" />
            </svg>
          </button>
          <button aria-label="主屏">
            <svg width="48" height="48" viewBox="0 0 48 48" fill="none" stroke="#b5b5b5" strokeWidth="4">
              <circle cx="24" cy="24" r="21" />
            </svg>
          </button>
          <button aria-label="最近">
            <svg width="44" height="46" viewBox="0 0 44 46" fill="none" stroke="#b5b5b5" strokeWidth="4">
              <rect x="3" y="3" width="38" height="40" rx="2" />
            </svg>
          </button>
        </SystemNav>
      </BottomBar>
    </>
  );
}
